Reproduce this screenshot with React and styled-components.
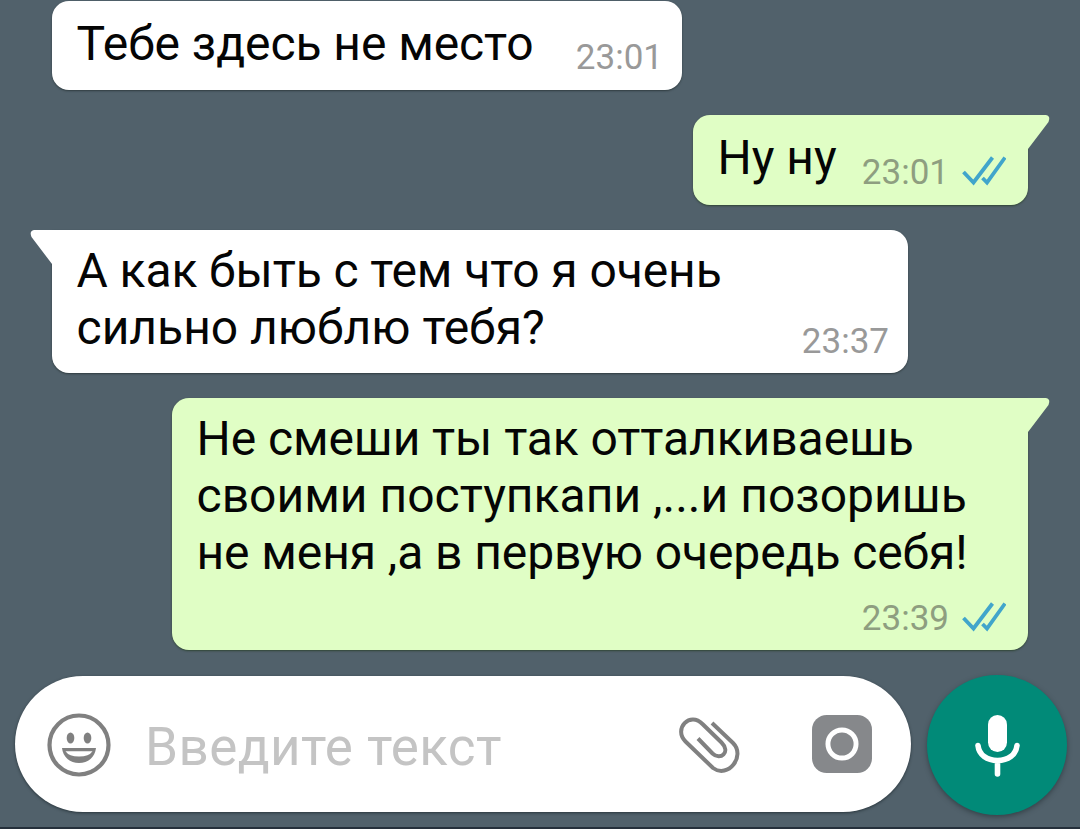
import styled, { createGlobalStyle, css } from "styled-components";

const GlobalStyles = createGlobalStyle`
  * {
    box-sizing: border-box;
  }

  body {
    margin: 0;
    background: #51616b;
    font-family: Roboto, "Liberation Sans", sans-serif;
  }
`;

const Screen = styled.div`
  display: flex;
  flex-direction: column;
  width: 1080px;
  height: 829px;
  overflow: hidden;
  background: #51616b;
  border-bottom: 2px solid #25303b;
`;

const Messages = styled.main`
  display: flex;
  flex-direction: column;
  align-items: flex-start;
  gap: 25px;
  height: 650px;
  padding: 1px 52px 0;
`;

const Bubble = styled.article`
  position: relative;
  display: flex;
  flex-shrink: 0;
  justify-content: space-between;
  align-items: flex-end;
  width: ${(props) => props.$width}px;
  height: ${(props) => props.$height}px;
  padding: 12px 19px 10px 24.5px;
  border-radius: 17px;
  background: #ffffff;
  box-shadow: 0 1px 2px rgba(25, 35, 35, 0.6);

  ${(props) =>
    props.$single &&
    css`
      padding-top: 14px;
      padding-bottom: 11px;
    `}

  ${(props) =>
    props.$stacked &&
    css`
      flex-direction: column;
      justify-content: space-between;
    `}

  ${(props) =>
    props.$own &&
    css`
      align-self: flex-end;
      padding-right: 20px;
      background: #e0fec5;
      box-shadow: 0 1px 2px rgba(30, 55, 25, 0.65);
    `}

  ${(props) => props.$tail && !props.$own && "border-top-left-radius: 0;"}
  ${(props) => props.$tail && props.$own && "border-top-right-radius: 0;"}
`;

const Tail = styled.svg`
  position: absolute;
  top: 0;
  width: 24px;
  height: 38px;
  overflow: visible;
  ${(props) => (props.$own ? "right: -22px;" : "left: -22px; transform: scaleX(-1);")}
`;

const Text = styled.p`
  align-self: flex-start;
  margin: 0;
  color: #050505;
  font-size: 48px;
  line-height: 57px;
`;

const Line = styled.span`
  display: block;
  white-space: pre;
  letter-spacing: ${(props) => props.$spacing || 0}px;
`;

const Meta = styled.footer`
  display: flex;
  align-items: center;
  gap: 13px;
  color: ${(props) => (props.$own ? "#8e9e80" : "#999999")};
  font-size: 35px;
  line-height: 42px;
`;

const Checks = styled.svg`
  width: 44px;
  height: 30px;
  margin: -4px 2px 0 0;
`;

const Composer = styled.footer`
  display: flex;
  align-items: flex-start;
  gap: 16px;
  padding: 25px 13px 0 15px;
`;

const InputBar = styled.div`
  display: flex;
  align-items: center;
  width: 896px;
  height: 136px;
  margin-top: 1px;
  padding: 0 39px 0 32px;
  border-radius: 68px;
  background: #ffffff;
  box-shadow: 0 1px 3px rgba(20, 30, 35, 0.65);
`;

const Placeholder = styled.span`
  flex: 1;
  margin-left: 34px;
  padding-top: 6px;
  color: #c4c4c4;
  font-size: 53px;
  letter-spacing: 0.4px;
  line-height: 62px;
  white-space: nowrap;
`;

const Icon = styled.svg`
  flex-shrink: 0;
  width: ${(props) => props.$width}px;
  height: ${(props) => props.$height}px;
  margin-top: ${(props) => props.$drop || 0}px;
  margin-right: ${(props) => props.$gap || 0}px;
`;

const MicButton = styled.button`
  display: flex;
  flex-shrink: 0;
  align-items: center;
  justify-content: center;
  width: 140px;
  height: 140px;
  padding: 0;
  border: 0;
  border-radius: 50%;
  background: #018a78;
  box-shadow: 0 2px 5px rgba(25, 35, 40, 0.5);
`;

const messages = [
  {
    lines: [{ text: "Тебе здесь не место", spacing: -0.07 }],
    time: "23:01",
    width: 630,
    height: 89,
  },
  {
    lines: [{ text: "Ну ну" }],
    time: "23:01",
    width: 335,
    height: 90,
    own: true,
    tail: true,
  },
  {
    lines: [
      { text: "А как быть с тем что я очень", spacing: -0.09 },
      { text: "сильно люблю тебя?" },
    ],
    time: "23:37",
    width: 856,
    height: 143,
    tail: true,
  },
  {
    lines: [
      { text: "Не смеши ты так отталкиваешь", spacing: -0.07 },
      { text: "своими поступкапи ,...и позоришь", spacing: 0.02 },
      { text: "не меня ,а в первую очередь себя!", spacing: -0.09 },
    ],
    time: "23:39",
    width: 856,
    height: 252,
    own: true,
    tail: true,
    stacked: true,
  },
];

const Message = ({ lines, time, width, height, own, tail, stacked }) => (
  <Bubble
    $width={width}
    $height={height}
    $own={own}
    $tail={tail}
    $stacked={stacked}
    $single={lines.length === 1}
  >
    {tail && (
      <Tail $own={own} viewBox="0 0 24 38">
        <path
          d="M0 0H20Q25 1 22.5 7L2 34V38H0Z"
          fill={own ? "#e0fec5" : "#ffffff"}
        />
      </Tail>
    )}
    <Text>
      {lines.map((line) => (
        <Line key={line.text} $spacing={line.spacing}>
          {line.text}
        </Line>
      ))}
    </Text>
    <Meta $own={own}>
      {time}
      {own && (
        <Checks viewBox="0 0 44 30" fill="none" stroke="#41a5cb" strokeWidth="3.8">
          <path d="M1.5 16L11.5 26.5L30.5 1.5" />
          <path d="M20.5 22L25 26.5L43 1.5" />
        </Checks>
      )}
    </Meta>
  </Bubble>
);

const SmileIcon = () => (
  <Icon $width={64} $height={64} $drop={2} viewBox="0 0 64 64">
    <circle cx="32" cy="32" r="29.5" fill="none" stroke="#808080" strokeWidth="4.2" />
    <ellipse cx="23.5" cy="25" rx="3.8" ry="5.6" fill="#808080" />
    <ellipse cx="40.5" cy="25" rx="3.8" ry="5.6" fill="#808080" />
    <path d="M15 35H49C48 44 41 50 32 50S16 44 15 35Z" fill="#808080" />
    <path d="M18.5 38.2H45.5Q42 43.5 32 43.5T18.5 38.2Z" fill="#ffffff" />
  </Icon>
);

const ClipIcon = () => (
  <Icon $width={64} $height={58} $gap={69} $drop={4} viewBox="0 0 64 58">
    <path
      d="M33 6L54 26C67 39 49 62 34 51L6.5 24.5C-6 12 11 -6 23.5 7L42.5 25.5C52 35 41.5 44 33.5 36.5L19 21.5"
      fill="none"
      stroke="#808080"
      strokeWidth="4"
    />
  </Icon>
);

const CameraIcon = () => (
  <Icon $width={60} $height={58} viewBox="0 0 61 59">
    <rect width="61" height="59" rx="15" fill="#86888b" />
    <circle cx="30.5" cy="29.5" r="14.3" fill="none" stroke="#ffffff" strokeWidth="5" />
  </Icon>
);

const MicIcon = () => (
  <Icon $width={46} $height={64} $drop={2} viewBox="0 0 46 64">
    <rect x="14" y="1" width="19" height="37" rx="9.5" fill="#ffffff" />
    <path
      d="M4 31.5C5 41 13 46.5 23.5 46.5S42 41 43 31.5M23.5 47V60"
      fill="none"
      stroke="#ffffff"
      strokeWidth="5.6"
      strokeLinecap="round"
    />
  </Icon>
);

const App = () => {
  return (
    <>
      <GlobalStyles />
      <Screen>
        <Messages>
          {messages.map((message, i) => (
            <Message key={i} {...message} />
          ))}
        </Messages>
        <Composer>
          <InputBar>
            <SmileIcon />
            <Placeholder>Введите текст</Placeholder>
            <ClipIcon />
            <CameraIcon />
          </InputBar>
          <MicButton aria-label="Голосовое сообщение">
            <MicIcon />
          </MicButton>
        </Composer>
      </Screen>
    </>
  );
};

export default App;
